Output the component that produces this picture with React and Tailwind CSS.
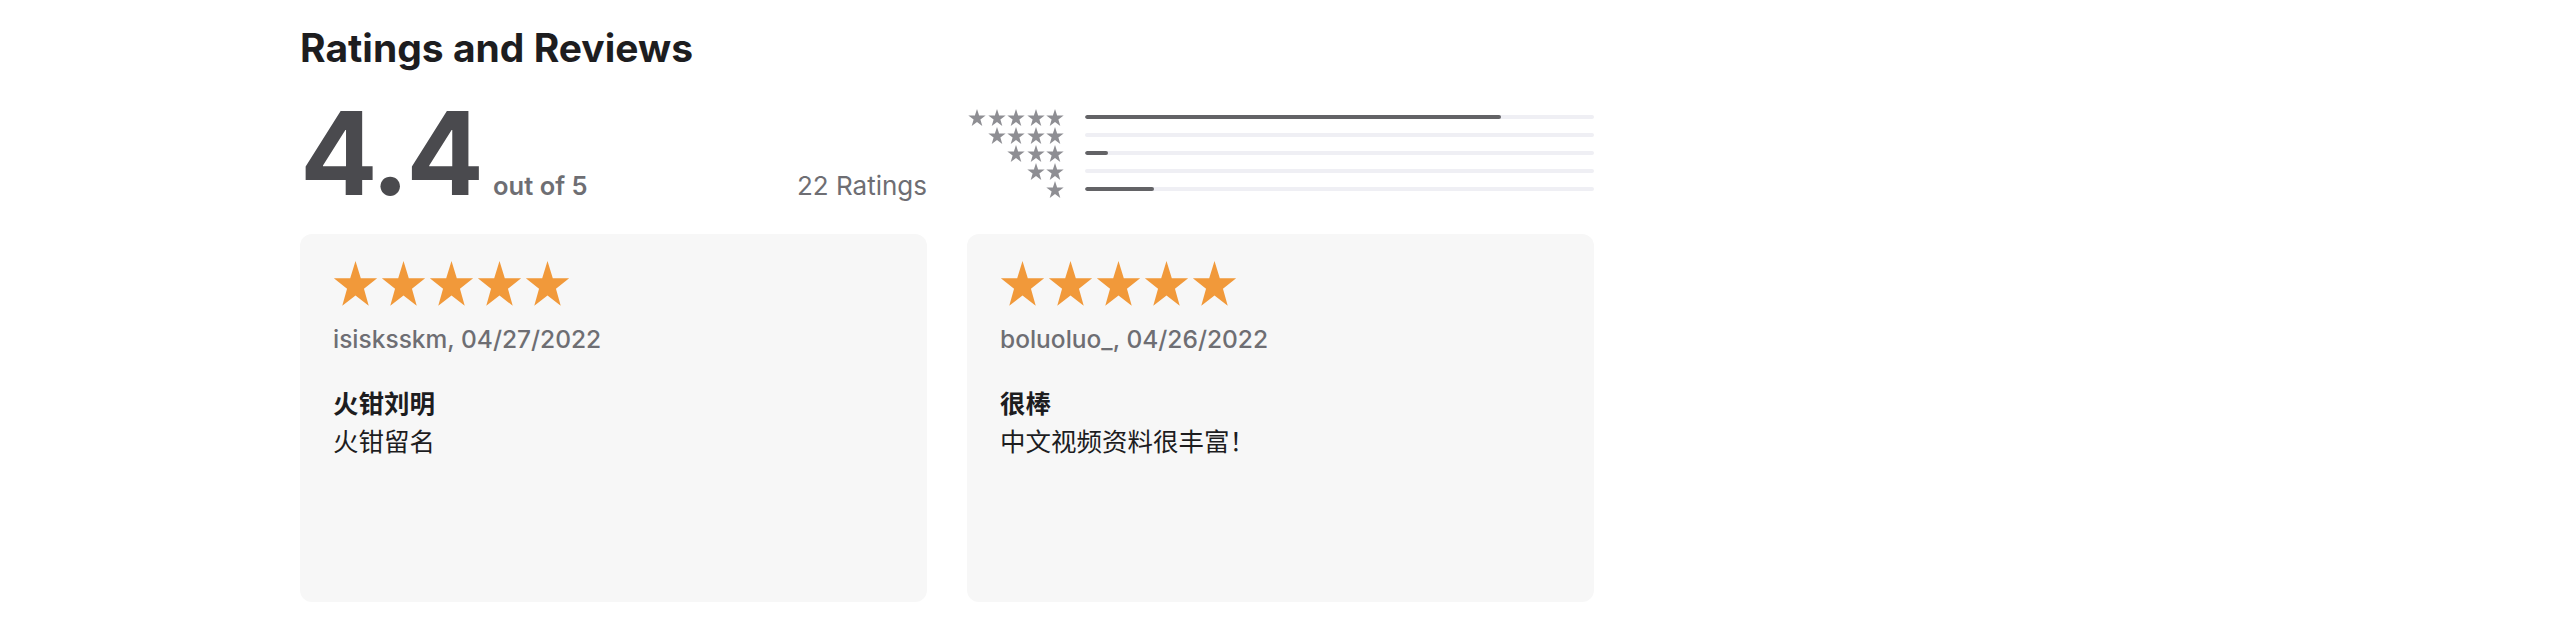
import React from 'react';

const reviews = [
  { id: 1, author: 'isisksskm', date: '04/27/2022', title: '火钳刘明', body: '火钳留名' },
  { id: 2, author: 'boluoluo_', date: '04/26/2022', title: '很棒', body: '中文视频资料很丰富！' },
];

// counts per star level, 5 down to 1
const histogram = [
  { stars: 5, count: 18 },
  { stars: 4, count: 0 },
  { stars: 3, count: 1 },
  { stars: 2, count: 0 },
  { stars: 1, count: 3 },
];
const total = 22;

const STAR_POINTS = '50,0 61.8,35.1 98.1,35.1 68.8,56.7 79.4,91.6 50,70.3 20.6,91.6 31.2,56.7 1.9,35.1 38.2,35.1';

const Star = ({ className }) => (
  <svg viewBox="0 0 100 92" className={className} preserveAspectRatio="none">
    <polygon points={STAR_POINTS} fill="currentColor" />
  </svg>
);

const HistogramRow = ({ stars, count }) => (
  <div className="flex items-center h-[18px]">
    <div className="w-[97px] flex justify-end gap-[1.5px] text-[#8e8e93]">
      {Array.from({ length: stars }).map((_, i) => (
        <Star key={i} className="w-[18px] h-[17px]" />
      ))}
    </div>
    <div className="ml-[21px] flex-1 h-[4px] rounded-full bg-[#efeff4] overflow-hidden">
      <div className="h-full rounded-full bg-[#636366]" style={{ width: `${(count / total) * 100}%` }}></div>
    </div>
  </div>
);

const ReviewCard = ({ review }) => (
  <div className="h-[368px] rounded-[12px] bg-[#f7f7f7] px-[33px] pt-[27px]">
    <div className="flex gap-[3px] text-[#f1993a]">
      {Array.from({ length: 5 }).map((_, i) => (
        <Star key={i} className="w-[45px] h-[45px]" />
      ))}
    </div>
    <p className="mt-[18px] text-[24.5px] leading-[30px] font-medium text-[#6e6e73]">
      {review.author}, {review.date}
    </p>
    <h3 className="mt-[30px] text-[25.5px] leading-[39px] font-semibold text-[#1d1d1f]">{review.title}</h3>
    <p className="text-[25.5px] leading-[38px] text-[#1d1d1f]">{review.body}</p>
  </div>
);

const App = () => {
  return (
    <div className="min-h-[642px] bg-white font-[Inter,'Noto_Sans_CJK_SC',sans-serif]">
      <div className="w-[1294px] ml-[300px] pt-[25px]">
        <h2 className="text-[39px] leading-[46px] font-bold text-[#1d1d1f]">Ratings and Reviews</h2>

        <div className="mt-[25px] grid grid-cols-[627px_627px] gap-x-[40px] items-start">
          <div className="flex items-baseline justify-between">
            <div className="flex items-baseline">
              <span className="text-[115px] leading-[115px] font-bold tracking-[-3px] text-[#4a4a4e]">4.4</span>
              <span className="ml-[12px] text-[25.5px] font-semibold text-[#6e6e73]">out of 5</span>
            </div>
            <span className="text-[26px] text-[#6e6e73]">{total} Ratings</span>
          </div>

          <div className="pt-[12px]">
            {histogram.map((row) => (
              <HistogramRow key={row.stars} stars={row.stars} count={row.count} />
            ))}
          </div>
        </div>

        <div className="mt-[23px] grid grid-cols-[627px_627px] gap-x-[40px]">
          {reviews.map((review) => (
            <ReviewCard key={review.id} review={review} />
          ))}
        </div>
      </div>
    </div>
  );
};

export default App;
